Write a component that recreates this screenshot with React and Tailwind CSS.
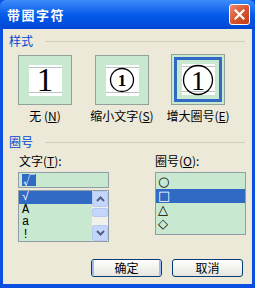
import React from "react";

const cjk = { fontFamily: '"Noto Sans CJK SC", "Liberation Sans", sans-serif' };

const Preview = ({ selected, children }) => (
  <div
    className={
      selected
        ? "w-[54px] h-[51px] border border-[#8fa39a] bg-[#c8e8d0] p-[2px]"
        : "w-[54px] h-[50px] border border-[#8fa39a] bg-[#c8e8d0] flex items-center justify-center"
    }
  >
    {selected ? (
      <div className="w-full h-full border-[3px] border-[#316ac5] flex items-center justify-center">
        {children}
      </div>
    ) : (
      children
    )}
  </div>
);

const Sample = ({ kind }) => (
  <div className="w-[33px] h-[31px] bg-white relative flex items-center justify-center">
    <div className="absolute left-0 right-0 top-[2px] h-px bg-[#b9c4c0]" />
    <div className="absolute left-0 right-0 bottom-[3px] h-px bg-[#b9c4c0]" />
    {kind === "none" && (
      <span className="text-[33px] leading-none text-black" style={{ fontFamily: '"Liberation Serif", serif' }}>
        1
      </span>
    )}
    {kind === "shrink" && (
      <svg width="26" height="26" viewBox="0 0 26 26" className="relative">
        <circle cx="13" cy="13" r="11.5" fill="none" stroke="black" strokeWidth="1.3" />
        <text x="13" y="19" textAnchor="middle" fontSize="17" fontWeight="bold" fontFamily="Liberation Serif, serif">1</text>
      </svg>
    )}
    {kind === "enlarge" && (
      <svg width="32" height="32" viewBox="0 0 32 32" className="relative">
        <circle cx="16" cy="16" r="14.5" fill="none" stroke="black" strokeWidth="1.3" />
        <text x="16" y="26" textAnchor="middle" fontSize="28" fontFamily="Liberation Serif, serif">1</text>
      </svg>
    )}
  </div>
);

const GroupLabel = ({ text }) => (
  <div className="flex items-center pr-[7px]">
    <span className="text-[12px] leading-[12px] text-[#0046d5] w-[36px]">{text}</span>
    <div className="flex-1 h-px bg-[#d0d0bf]" />
  </div>
);

const ArrowBtn = ({ up }) => (
  <div className="w-[16px] h-[16px] rounded-[2px] border border-[#b8c9f0] bg-[#c4d6fb] flex items-center justify-center">
    <svg width="9" height="6" viewBox="0 0 9 6">
      <path d={up ? "M1 5 L4.5 1.5 L8 5" : "M1 1 L4.5 4.5 L8 1"} fill="none" stroke="#4d6185" strokeWidth="2" />
    </svg>
  </div>
);

const XpButton = ({ children, focused }) => (
  <div className="w-[71px] h-[18px] rounded-[3px] border border-[#003c74] bg-gradient-to-b from-white to-[#e6e5dd] flex items-center justify-center">
    <div
      className={
        focused
          ? "w-full h-full rounded-[2px] border-x-2 border-[#9dbaf2] flex items-center justify-center"
          : "w-full h-full flex items-center justify-center"
      }
    >
      <span className="text-[12px] leading-[12px] text-black">{children}</span>
    </div>
  </div>
);

const Choice = ({ label, selected, kind, className }) => (
  <div className={"w-[54px] flex flex-col items-center " + className}>
    <Preview selected={selected}>
      <Sample kind={kind} />
    </Preview>
    <span className="mt-[5px] text-[12px] leading-[12px] text-black whitespace-nowrap">{label}</span>
  </div>
);

export default function App() {
  return (
    <div className="w-[255px] h-[288px] flex flex-col bg-[#0a4fe0] overflow-hidden" style={cjk}>
      {/* title bar */}
      <div className="h-[29px] flex items-center justify-between pl-[7px] pr-[5px] bg-gradient-to-b from-[#3b8cf9] via-[#065be9] to-[#0047d6] rounded-t-[6px]">
        <span className="text-[13px] font-bold text-white tracking-[1.5px] leading-none">带圈字符</span>
        <div className="w-[21px] h-[21px] rounded-[3px] border border-white bg-gradient-to-br from-[#e9896c] via-[#d9552f] to-[#c03c17] flex items-center justify-center">
          <svg width="11" height="11" viewBox="0 0 11 11">
            <path d="M1.5 1.5 L9.5 9.5 M9.5 1.5 L1.5 9.5" stroke="white" strokeWidth="2.2" strokeLinecap="square" />
          </svg>
        </div>
      </div>

      {/* body */}
      <div className="flex-1 mx-[3px] mb-[4px] bg-[#ece9d8] flex flex-col pl-[6px] pt-[6px]">
        <GroupLabel text="样式" />

        <div className="flex mt-[8px] pl-[9px]">
          <Choice kind="none" label={<>无 (<u>N</u>)</>} className="" />
          <Choice kind="shrink" label={<>缩小文字(<u>S</u>)</>} className="ml-[23px]" />
          <Choice kind="enlarge" selected label={<>增大圈号(<u>E</u>)</>} className="ml-[22px] -mt-[1px]" />
        </div>

        <div className="mt-[14px]">
          <GroupLabel text="圈号" />
        </div>

        <div className="flex mt-[7px] pl-[9px]">
          {/* 文字 */}
          <div className="flex flex-col w-[91px]">
            <span className="text-[12px] leading-[12px] text-black pl-[1px]">文字(<u>T</u>):</span>
            <div className="mt-[5px] h-[16px] border border-[#8f9da8] bg-[#c8e8d0] flex items-center pl-[3px]">
              <span className="bg-[#316ac5] text-white text-[12px] leading-[12px] px-[1px]">√</span>
            </div>
            <div className="mt-[2px] h-[52px] border border-[#8f9da8] bg-[#c8e8d0] flex">
              <div className="flex-1 flex flex-col text-[12px] leading-[12px]" style={{ fontFamily: '"Liberation Mono", "Noto Sans CJK SC", monospace' }}>
                <div className="h-[12.5px] bg-[#316ac5] text-white pl-[3px]">√</div>
                <div className="h-[12.5px] text-black pl-[3px]">A</div>
                <div className="h-[12.5px] text-black pl-[3px]">a</div>
                <div className="h-[12.5px] text-black pl-[3px]">!</div>
              </div>
              <div className="w-[16px] bg-[#f3f1ec] flex flex-col">
                <ArrowBtn up />
                <div className="h-[9px] mt-[1px] rounded-[2px] border border-[#b8c9f0] bg-[#c4d6fb]" />
                <div className="flex-1" />
                <ArrowBtn />
              </div>
            </div>
          </div>

          {/* 圈号 */}
          <div className="flex flex-col w-[91px] ml-[46px]">
            <span className="text-[12px] leading-[12px] text-black">圈号(<u>O</u>):</span>
            <div className="mt-[5px] h-[63px] border border-[#8f9da8] bg-[#c8e8d0] flex flex-col pt-[2px] text-[13px] leading-[14px]" style={{ fontFamily: '"DejaVu Sans", sans-serif' }}>
              <div className="h-[14px] pl-[2px] text-black">○</div>
              <div className="h-[14px] pl-[2px] text-white bg-[#316ac5]">□</div>
              <div className="h-[14px] pl-[2px] text-black">△</div>
              <div className="h-[14px] pl-[2px] text-black">◇</div>
            </div>
          </div>
        </div>

        <div className="flex mt-[17px] pl-[82px] gap-[10px]">
          <XpButton focused>确定</XpButton>
          <XpButton>取消</XpButton>
        </div>
      </div>
    </div>
  );
}
